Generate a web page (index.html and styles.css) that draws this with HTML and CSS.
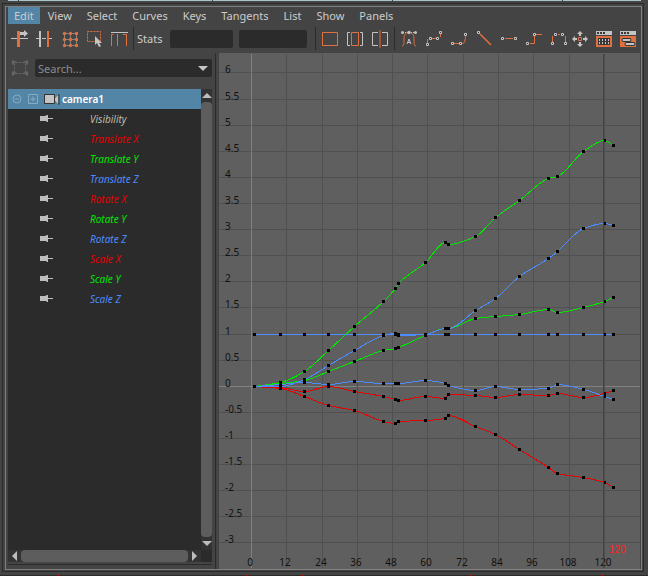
FILE: index.html
```html
<!DOCTYPE html>
<html lang="en">
<head>
    <meta charset="UTF-8">
    <meta name="viewport" content="width=device-width, initial-scale=1.0">
    <title>Graph Editor</title>
    <link rel="stylesheet" href="styles.css">
</head>
<body>
    <div class="top-strip"><span class="cell tiny"></span><span class="cell a"></span><span class="cell b"></span><span class="cell c"></span><span class="cell d"></span></div>

    <div class="dock">
        <main class="frame">
            <nav class="menubar">
                <button class="active">Edit</button>
                <button>View</button>
                <button>Select</button>
                <button>Curves</button>
                <button>Keys</button>
                <button>Tangents</button>
                <button>List</button>
                <button>Show</button>
                <button>Panels</button>
            </nav>

            <div class="toolbar">
                <div class="tools">
                    <button aria-label="Move nearest key"><svg viewBox="0 0 18 18"><path class="w" d="M1 8.5h17"/><path class="of" d="M7 1h3v16H7z"/><path class="wf" d="M10 2h4V0l4 3.500-4 3.500V5h-4z"/></svg></button>
                    <button aria-label="Insert keys"><svg viewBox="0 0 18 18"><path class="w" d="M1 8.500h3M7 8.500h4M14 8.500h3"/><path class="wf" d="M4 1h2v16H4z"/><path class="of" d="M12 1h2v16h-2z"/></svg></button>
                    <button aria-label="Lattice"><svg viewBox="0 0 18 18"><path class="w dots" d="M4.500 3.500h12v12h-12zM4.500 9.500h12M10.500 3.500v12"/><g class="of"><circle cx="4.500" cy="3.500" r="1.700"/><circle cx="10.500" cy="3.500" r="1.700"/><circle cx="16.500" cy="3.500" r="1.700"/><circle cx="4.500" cy="9.500" r="1.700"/><circle cx="10.500" cy="9.500" r="1.700"/><circle cx="16.500" cy="9.500" r="1.700"/><circle cx="4.500" cy="15.500" r="1.700"/><circle cx="10.500" cy="15.500" r="1.700"/><circle cx="16.500" cy="15.500" r="1.700"/></g></svg></button>
                    <button aria-label="Region"><svg viewBox="0 0 18 18"><path class="o dash" d="M2.500 1.500h13v10h-13z"/><path class="wf" d="M10 6v9l2-2 2 4 2-1-2-3h3z"/></svg></button>
                    <button aria-label="Retime"><svg viewBox="0 0 18 18"><path class="w" d="M1 2.500h17"/><path class="o" d="M1.500 16V4.500h2M7.500 16V4M13 4.500h3.500V16"/></svg></button>
                </div>
                <span class="sep"></span>
                <label for="stat-time">Stats</label>
                <input id="stat-time" class="stat" type="text">
                <input class="stat wide" type="text" aria-label="Stats value">
                <span class="sep"></span>
                <div class="tools">
                    <button aria-label="Frame all"><svg viewBox="0 0 18 18"><path class="o" d="M1.500 2.500h15v13h-15z"/></svg></button>
                    <button aria-label="Frame playback range"><svg viewBox="0 0 18 18"><path class="w" d="M4 2.500H1.500v13H4M14 2.500h2.500v13H14"/><path class="o" d="M5.500 2.500h7v13h-7z"/></svg></button>
                    <button aria-label="Center view"><svg viewBox="0 0 18 18"><path class="w" d="M7 2.500H1.500v13H7M11 2.500h5.500v13H11"/><path fill="#9a5438" d="M8 0h2v18H8z"/></svg></button>
                </div>
                <span class="sep"></span>
                <div class="tools">
                    <button aria-label="Auto tangents"><svg viewBox="0 0 18 18"><path class="o" d="M2 16c2 0 2-3 2-6s0-6 3-7M11 3c3 1 3 4 3 7s0 6 2 6"/><path class="w dots" d="M3 2.500h13"/><g class="wf"><circle cx="2.500" cy="2.500" r="1.500"/><circle cx="9" cy="2.500" r="1.700"/><circle cx="15.500" cy="2.500" r="1.500"/></g><path class="w" d="M7 14l2-5 2 5M8 12.500h2"/></svg></button>
                    <button aria-label="Spline tangents"><svg viewBox="0 0 18 18"><path class="o" d="M2.500 14V9M5 8.500h7M15.500 7V2"/><g class="node"><path d="M1.500 13.500h2v2h-2zM4.500 7.500h2v2h-2zM11.500 7.500h2v2h-2zM14.500 1.500h2v2h-2z"/></g></svg></button>
                    <button aria-label="Clamped tangents"><svg viewBox="0 0 18 18"><path class="o" d="M2.500 13.500h10c2 0 3-3 3-9"/><g class="node"><path d="M1.500 12.500h2v2h-2zM9.500 12.500h2v2h-2zM14.500 3.500h2v2h-2z"/></g></svg></button>
                    <button aria-label="Linear tangents"><svg viewBox="0 0 18 18"><path class="o slope" d="M5 4l11 11"/><g class="node"><path d="M2.500 1.500h2v2h-2z"/></g></svg></button>
                    <button aria-label="Flat tangents"><svg viewBox="0 0 18 18"><path class="o" d="M5 8.500h8"/><g class="node"><path d="M1.500 7.500h2v2h-2zM14.500 7.500h2v2h-2z"/></g></svg></button>
                    <button aria-label="Stepped tangents"><svg viewBox="0 0 18 18"><path class="o" d="M5 13.500h4.500V4.500H17"/><g class="node"><path d="M1.500 12.500h2v2h-2zM8.500 3.500h2v2h-2z"/></g></svg></button>
                    <button aria-label="Plateau tangents"><svg viewBox="0 0 18 18"><path class="o" d="M2.500 12V6M8 4.500h2M15.500 12V6"/><g class="node"><path d="M1.500 12.500h2v2h-2zM4.500 3.500h2v2h-2zM11.500 3.500h2v2h-2zM14.500 12.500h2v2h-2z"/></g></svg></button>
                </div>
                <div class="tools editors">
                    <button aria-label="Move"><svg viewBox="0 0 18 18"><path class="o" d="M7.500 7.500h3v3h-3z"/><path class="wf" d="M9 1l3 3h-2v2H8V4H6zM9 17l-3-3h2v-2h2v2h2zM1 9l3-3v2h2v2H4v2zM17 9l-3 3v-2h-2V8h2V6z"/></svg></button>
                    <button aria-label="Dope sheet"><svg viewBox="0 0 18 18"><path class="wf" d="M1 1h16v4H1z"/><path class="df" d="M2 2h2v2H2zM5 2h2v2H5zM8 2h2v2H8z"/><path class="of" d="M1 6h16v11H1z"/><path class="df" d="M3 8h12v7H3z"/><path class="w grid-dots" d="M4 10h11M4 13h11"/></svg></button>
                    <button aria-label="Trax editor"><svg viewBox="0 0 18 18"><path class="wf" d="M1 1h16v4H1z"/><path class="df" d="M2 2h2v2H2zM5 2h2v2H5zM8 2h2v2H8z"/><path class="of" d="M1 6h16v11H1z"/><path class="pill-out" d="M4.500 10h6M7.500 14h7"/><path class="pill" d="M4.500 10h6M7.500 14h7"/></svg></button>
                </div>
            </div>

            <div class="content">
                <aside class="sidebar">
                    <div class="search-row">
                        <button class="isolate" aria-label="Isolate"><svg viewBox="0 0 16 16"><path class="g" d="M4 2.500h8M4 13.500h8M2.500 4v8M13.500 4v8"/><path class="gf" d="M0 0l5 2-5 3zM16 0l-5 2 5 3zM0 11l5 2-5 3zM16 11l-5 2 5 3z"/></svg></button>
                        <div class="search">
                            <input type="text" placeholder="Search..." aria-label="Search">
                            <button aria-label="Search options"><svg viewBox="0 0 10 5"><path class="wf" d="M0 0h10L5 5z"/></svg></button>
                        </div>
                    </div>

                    <div class="outliner">
                        <ul class="tree">
                            <li class="object">
                                <svg class="toggle" viewBox="0 0 10 10"><circle cx="5" cy="5" r="4"/><path d="M3 5h4"/></svg>
                                <svg class="toggle" viewBox="0 0 10 10"><path d="M.5.5h9v9h-9zM2.500 5h5M5 2.500v5"/></svg>
                                <svg class="camera" viewBox="0 0 16 12"><path class="wf" d="M1 2h9v9H1z"/><path d="M.5 1.500h10v9H.5zM11 5l4-3.500v10L11 8" fill="none" stroke="#333"/><path class="wf" d="M11 5l3-3v9l-3-3z"/></svg>
                                <span>camera1</span>
                            </li>
                            <li class="none"><svg viewBox="0 0 14 8"><use href="#plug"/></svg>Visibility</li>
                            <li class="x"><svg viewBox="0 0 14 8"><use href="#plug"/></svg>Translate X</li>
                            <li class="y"><svg viewBox="0 0 14 8"><use href="#plug"/></svg>Translate Y</li>
                            <li class="z"><svg viewBox="0 0 14 8"><use href="#plug"/></svg>Translate Z</li>
                            <li class="x"><svg viewBox="0 0 14 8"><use href="#plug"/></svg>Rotate X</li>
                            <li class="y"><svg viewBox="0 0 14 8"><use href="#plug"/></svg>Rotate Y</li>
                            <li class="z"><svg viewBox="0 0 14 8"><use href="#plug"/></svg>Rotate Z</li>
                            <li class="x"><svg viewBox="0 0 14 8"><use href="#plug"/></svg>Scale X</li>
                            <li class="y"><svg viewBox="0 0 14 8"><use href="#plug"/></svg>Scale Y</li>
                            <li class="z"><svg viewBox="0 0 14 8"><use href="#plug"/></svg>Scale Z</li>
                        </ul>
                        <div class="scroll vertical">
                            <button aria-label="Scroll up"><svg viewBox="0 0 10 5"><path d="M0 5h10L5 0z"/></svg></button>
                            <span class="thumb"></span>
                            <button aria-label="Scroll down"><svg viewBox="0 0 10 5"><path d="M0 0h10L5 5z"/></svg></button>
                        </div>
                        <div class="scroll horizontal">
                            <button aria-label="Scroll left"><svg viewBox="0 0 5 10"><path d="M5 0v10L0 5z"/></svg></button>
                            <span class="thumb"></span>
                            <button aria-label="Scroll right"><svg viewBox="0 0 5 10"><path d="M0 0v10l5-5z"/></svg></button>
                        </div>
                        <div class="corner"></div>
                    </div>
                </aside>

                <section class="graph">
                    <svg id="graph" viewBox="0 0 421 514"></svg>
                </section>
            </div>
        </main>
    </div>

    <svg class="timeline" viewBox="0 0 648 1" preserveAspectRatio="none"><path d="M58 0h1v1h-1zM246 0h1v1h-1zM302 0h1v1h-1zM470 0h1v1h-1zM602 0h1v1h-1z"/></svg>

    <svg width="0" height="0" class="defs"><defs><g id="plug"><path d="M0 1h5l2-1h1v7H7L6 6H0z"/><path d="M8 3h5v1H8z"/></g></defs></svg>

    <script src="graph.js"></script>
</body>
</html>
```

FILE: styles.css
```css
* {
    box-sizing: border-box;
}
body {
    margin: 0;
    height: 100vh;
    display: flex;
    flex-direction: column;
    overflow: hidden;
    background-color: #444444;
    color: #cccccc;
    font-family: "Noto Sans", "Open Sans", sans-serif;
    font-size: 11px;
}
button {
    display: flex;
    align-items: center;
    justify-content: center;
    padding: 0;
    border: none;
    background: none;
    color: inherit;
    font: inherit;
}
input {
    min-width: 0;
    padding: 0;
    border: none;
    outline: none;
    border-radius: 2px;
    background-color: #2b2b2b;
    color: #c8c8c8;
    font: inherit;
}
svg {
    display: block;
    flex: none;
}

/* icon paints */
.w {
    fill: none;
    stroke: #c4c4c4;
}
.o {
    fill: none;
    stroke: #e07040;
}
.g {
    fill: none;
    stroke: #666666;
    stroke-dasharray: 2 1;
}
.wf {
    fill: #c4c4c4;
}
.of {
    fill: #e07040;
}
.df {
    fill: #383838;
}
.gf {
    fill: #666666;
}
.dots {
    stroke-dasharray: 1 1;
}
.dash {
    stroke-dasharray: 2 1;
}
.slope {
    stroke-width: 1.5;
}
.grid-dots {
    stroke-width: 2;
    stroke-dasharray: 1 2;
}
.node {
    fill: #333333;
    stroke: #c4c4c4;
}
.pill-out {
    stroke: #333333;
    stroke-width: 4;
    stroke-linecap: round;
}
.pill {
    stroke: #c4c4c4;
    stroke-width: 2;
    stroke-linecap: round;
}

/* window edges */
.top-strip {
    display: flex;
    gap: 1px;
    height: 1px;
    margin: 0 7px 0 8px;
}
.cell {
    background-color: #a9c6cb;
}
.tiny {
    width: 10px;
}
.a {
    flex: 193;
}
.b {
    flex: 179;
}
.c {
    flex: 169;
}
.d {
    flex: 78;
}
.dock {
    flex: 1;
    min-height: 0;
    display: flex;
    margin: 2px 4px 3px 2px;
    padding: 2px 1px 1px 2px;
    border: 1px solid #2b2b2b;
}
.frame {
    flex: 1;
    min-width: 0;
    display: flex;
    flex-direction: column;
    border: 1px solid #808080;
}
.timeline {
    width: 100%;
    height: 1px;
    background-color: #2b2b2b;
    fill: #e00000;
}
.defs {
    position: absolute;
}

.menubar {
    display: flex;
    height: 17px;
    padding-left: 2px;
}
.menubar button {
    padding: 0 7px 0 8px;
}
.menubar .active {
    padding: 0 6px;
    background-color: #5285a6;
}

.toolbar {
    display: flex;
    align-items: center;
    height: 29px;
    padding-left: 4px;
}
.tools {
    display: flex;
    gap: 7px;
}
.tools svg {
    width: 18px;
    height: 18px;
}
.editors {
    gap: 6px;
    margin-left: 3px;
}
.sep {
    width: 1px;
    height: 23px;
    margin: 0 5px;
    background-color: #2b2b2b;
}
.toolbar label {
    width: 33px;
    margin-left: -2px;
}
.stat {
    width: 63px;
    height: 18px;
    margin-right: 6px;
}
.wide {
    width: 68px;
    margin-right: 3px;
}

.content {
    flex: 1;
    min-height: 0;
    display: flex;
}
.sidebar {
    flex: none;
    width: 210px;
    display: flex;
    flex-direction: column;
    padding: 6px 3px 4px 2px;
    border-right: 1px solid #2b2b2b;
}
.search-row {
    display: flex;
    align-items: center;
    gap: 7px;
    height: 18px;
    padding-left: 4px;
    margin-bottom: 12px;
}
.isolate svg {
    width: 16px;
    height: 16px;
}
.search {
    flex: 1;
    min-width: 0;
    display: flex;
    height: 18px;
    padding: 0 4px 0 3px;
    border-radius: 2px;
    background-color: #2b2b2b;
}
.search input {
    flex: 1;
}
.search input::placeholder {
    color: #8c8c8c;
    opacity: 1;
}
.search svg {
    width: 10px;
    height: 5px;
}

.outliner {
    flex: 1;
    min-height: 0;
    display: grid;
    grid-template-columns: 1fr 11px;
    grid-template-rows: 1fr 12px;
    padding-bottom: 2px;
    border-bottom: 1px solid #2b2b2b;
}
.tree {
    margin: 0;
    padding: 0;
    overflow: hidden;
    list-style: none;
    background-color: #2b2b2b;
}
.tree li {
    display: flex;
    align-items: center;
    gap: 36px;
    height: 20px;
    padding-left: 32px;
    font-size: 10px;
    font-style: italic;
}
.tree li svg {
    width: 14px;
    height: 8px;
    fill: #bdbdbd;
}
.tree .object {
    gap: 6px;
    padding-left: 4px;
    background-color: #5285a6;
    color: #ffffff;
    font-style: normal;
    font-weight: 600;
}
.tree .object .toggle {
    width: 10px;
    height: 10px;
    fill: none;
    stroke: #86abc2;
}
.tree .object .camera {
    width: 16px;
    height: 12px;
}
.tree .object span {
    margin-left: -4px;
}
.none {
    color: #bcbcac;
}
.x {
    color: #e60000;
}
.y {
    color: #00e600;
}
.z {
    color: #4c8cff;
}
.scroll {
    display: flex;
    background-color: #333333;
    fill: #bdbdbd;
}
.vertical {
    flex-direction: column;
}
.scroll button {
    flex: none;
    width: 13px;
    height: 13px;
}
.vertical button {
    width: 11px;
}
.horizontal button {
    height: 12px;
}
.vertical svg {
    width: 10px;
    height: 5px;
}
.horizontal svg {
    width: 5px;
    height: 10px;
}
.thumb {
    flex: 1;
    border-radius: 4px;
    background-color: #5d5d5d;
}
.corner {
    background-color: #2b2b2b;
}

.graph {
    flex: 1;
    min-width: 0;
    margin-left: 3px;
    margin-right: 1px;
    padding-top: 1px;
    background-color: #5f5f5f;
}
.graph svg {
    width: 100%;
}
.graph line {
    stroke: #505050;
    shape-rendering: crispEdges;
}
.graph .axis {
    stroke: #808080;
}
.graph .curve {
    fill: none;
    stroke: currentColor;
    shape-rendering: crispEdges;
}
.graph .now {
    stroke: #e00000;
}
.graph text {
    fill: #111111;
    font-size: 10px;
}
.graph .frame-label {
    text-anchor: middle;
}
.graph .now-label {
    fill: #ff2020;
    font-family: "Liberation Sans", sans-serif;
}
```

FILE: graph.js
```js
const svg = document.getElementById('graph');
const ZERO_X = 32.5;
const ZERO_Y = 332.3;

function add(tag, attrs, text) {
    const el = document.createElementNS('http://www.w3.org/2000/svg', tag);
    for (const key in attrs) el.setAttribute(key, attrs[key]);
    if (text !== undefined) el.textContent = text;
    svg.appendChild(el);
}

// grid
for (let v = 6; v >= -3; v -= 0.5) {
    const y = Math.floor(ZERO_Y - v * 52.22) + 0.5;
    add('line', { x1: 0, x2: 421, y1: y, y2: y, class: v === 0 ? 'axis' : '' });
    add('text', { x: 6, y: y + 0.5 }, v);
}
for (let f = 0; f <= 120; f += 12) {
    const x = Math.floor(ZERO_X + f * 2.94) + 0.5;
    add('line', { x1: x, x2: x, y1: 0, y2: 514, class: f === 0 ? 'axis' : '' });
    add('text', { x: x - 1.5, y: 512, class: 'frame-label' }, f);
}

// key positions, in graph units of one pixel
const keys = [35, 61, 85, 109, 135, 164, 176, 179, 206, 226, 229, 256, 276, 300, 329, 338, 364, 385, 394];
const curves = [
    ['x', [332, 333, 337, 332, 337, 342, 345, 346, 342, 344, 340, 341, 343, 340, 341, 339, 343, 339, 336]],
    ['x', [332, 334, 342, 351, 356, 367, 369, 367, 366, 364, 361, 372, 380, 395, 413, 419, 423, 428, 433]],
    ['y', [332, 329, 326, 317, 307, 296, 294, 293, 281, 274, 274, 264, 262, 260, 255, 258, 253, 247, 243]],
    ['y', [332, 328, 317, 296, 272, 247, 234, 229, 208, 188, 190, 182, 163, 146, 124, 122, 97, 86, 91]],
    ['z', [332, 332, 325, 311, 296, 281, 279, 281, 280, 274, 274, 256, 244, 222, 204, 197, 174, 169, 171]],
    ['z', [332, 330, 328, 330, 327, 329, 329, 329, 326, 329, 331, 336, 332, 335, 334, 330, 335, 342, 345]],
    ['z', keys.map(() => 280)]
];

// monotone cubic through the keys
function curvePath(ys) {
    const n = keys.length;
    const slope = [];
    for (let i = 0; i < n - 1; i++) slope.push((ys[i + 1] - ys[i]) / (keys[i + 1] - keys[i]));
    const m = ys.map((y, i) => {
        if (i === 0) return slope[0];
        if (i === n - 1) return slope[n - 2];
        const a = slope[i - 1], b = slope[i];
        return a * b <= 0 ? 0 : 2 * a * b / (a + b);
    });
    let d = `M${keys[0] + 0.5} ${ys[0] + 0.5}`;
    for (let i = 0; i < n - 1; i++) {
        const h = (keys[i + 1] - keys[i]) / 3;
        d += `C${keys[i] + 0.5 + h} ${ys[i] + 0.5 + m[i] * h} ${keys[i + 1] + 0.5 - h} ${ys[i + 1] + 0.5 - m[i + 1] * h} ${keys[i + 1] + 0.5} ${ys[i + 1] + 0.5}`;
    }
    return d;
}

curves.forEach(([axis, ys]) => add('path', { class: 'curve ' + axis, d: curvePath(ys) }));
curves.forEach(([axis, ys]) => ys.forEach((y, i) => {
    add('rect', { x: keys[i] - 1, y: y - 1, width: 3, height: 3 });
}));

// current time
add('line', { x1: 384.5, x2: 384.5, y1: 0, y2: 514, class: 'now' });
add('text', { x: 390, y: 499, class: 'now-label' }, 120);
```
